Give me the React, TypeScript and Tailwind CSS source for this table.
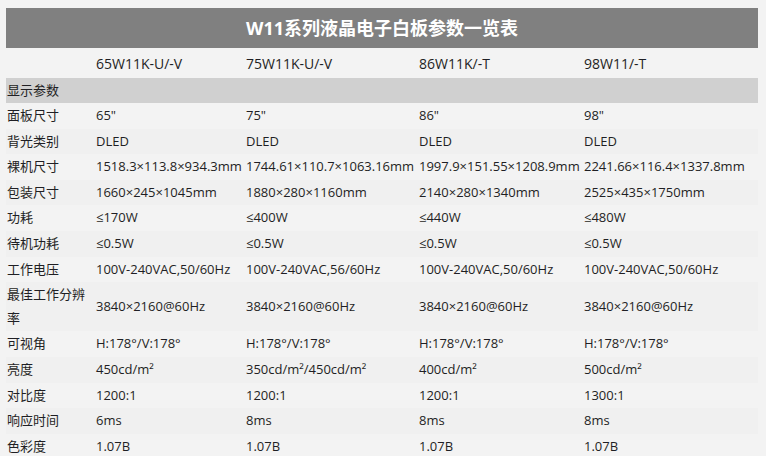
import React from "react";

const models = ["65W11K-U/-V", "75W11K-U/-V", "86W11K/-T", "98W11/-T"];

const rows: { label: React.ReactNode; values: string[] }[] = [
  { label: "面板尺寸", values: ['65"', '75"', '86"', '98"'] },
  { label: "背光类别", values: ["DLED", "DLED", "DLED", "DLED"] },
  {
    label: "裸机尺寸",
    values: [
      "1518.3×113.8×934.3mm",
      "1744.61×110.7×1063.16mm",
      "1997.9×151.55×1208.9mm",
      "2241.66×116.4×1337.8mm",
    ],
  },
  {
    label: "包装尺寸",
    values: ["1660×245×1045mm", "1880×280×1160mm", "2140×280×1340mm", "2525×435×1750mm"],
  },
  { label: "功耗", values: ["≤170W", "≤400W", "≤440W", "≤480W"] },
  { label: "待机功耗", values: ["≤0.5W", "≤0.5W", "≤0.5W", "≤0.5W"] },
  {
    label: "工作电压",
    values: ["100V-240VAC,50/60Hz", "100V-240VAC,56/60Hz", "100V-240VAC,50/60Hz", "100V-240VAC,50/60Hz"],
  },
  {
    label: (
      <>
        最佳工作分辨
        <br />率
      </>
    ),
    values: ["3840×2160@60Hz", "3840×2160@60Hz", "3840×2160@60Hz", "3840×2160@60Hz"],
  },
  { label: "可视角", values: ["H:178°/V:178°", "H:178°/V:178°", "H:178°/V:178°", "H:178°/V:178°"] },
  { label: "亮度", values: ["450cd/m²", "350cd/m²/450cd/m²", "400cd/m²", "500cd/m²"] },
  { label: "对比度", values: ["1200:1", "1200:1", "1200:1", "1300:1"] },
  { label: "响应时间", values: ["6ms", "8ms", "8ms", "8ms"] },
  { label: "色彩度", values: ["1.07B", "1.07B", "1.07B", "1.07B"] },
];

const font = { fontFamily: '"Open Sans", "Noto Sans CJK SC", sans-serif' };

const App = () => {
  return (
    <div className="w-[766px] h-[456px] overflow-hidden bg-[#f3f3f3] pt-2 px-[6px]" style={font}>
      <table className="table-fixed w-[752px] border-collapse text-[13px] text-[#1f1f24]">
        <colgroup>
          <col className="w-[90px]" />
          <col className="w-[150px]" />
          <col className="w-[173px]" />
          <col className="w-[165px]" />
          <col className="w-[174px]" />
        </colgroup>
        <thead>
          <tr className="bg-[#808080]">
            <th colSpan={5} className="h-10 text-center text-[18px] font-bold text-white">
              W11系列液晶电子白板参数一览表
            </th>
          </tr>
        </thead>
        <tbody>
          <tr className="h-[30px]">
            <td></td>
            {models.map((m) => (
              <td key={m} className="text-[14px] whitespace-nowrap align-middle">
                {m}
              </td>
            ))}
          </tr>
          <tr className="h-[25px] bg-[#d0d0d0]">
            <td colSpan={5} className="pl-px">
              显示参数
            </td>
          </tr>
          {rows.map((r, i) => (
            <tr key={i} className={i % 2 === 1 ? "bg-[#f0f0f0]" : ""}>
              <td className="pl-px py-px leading-[23.6px] align-middle whitespace-nowrap">{r.label}</td>
              {r.values.map((v, j) => (
                <td key={j} className="py-px leading-[23.6px] align-middle whitespace-nowrap">
                  {v}
                </td>
              ))}
            </tr>
          ))}
        </tbody>
      </table>
    </div>
  );
};

export default App;
